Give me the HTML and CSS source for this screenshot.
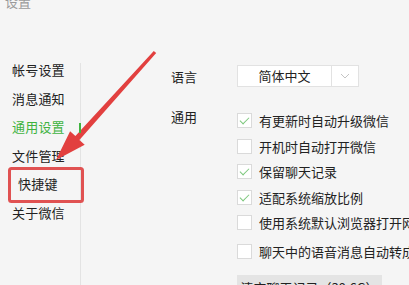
FILE: index.html
```html
<!DOCTYPE html>
<html lang="zh">
<head>
<meta charset="utf-8">
<link rel="stylesheet" href="styles.css">
</head>
<body>
<div class="window">
  <div class="title">设置</div>
  <div class="main">
    <nav class="sidebar">
      <div class="nav-item">帐号设置</div>
      <div class="nav-item">消息通知</div>
      <div class="nav-item active">通用设置</div>
      <div class="nav-item">文件管理</div>
      <div class="nav-item indent">快捷键</div>
      <div class="nav-item">关于微信</div>
    </nav>
    <section class="panel">
      <div class="row lang-row">
        <div class="label">语言</div>
        <div class="select">
          <div class="select-text">简体中文</div>
          <div class="select-arrow">
            <svg width="10" height="6" viewBox="0 0 10 6"><path d="M1 1 L5 5 L9 1" fill="none" stroke="#c4c4c4" stroke-width="1"/></svg>
          </div>
        </div>
      </div>
      <div class="row general-row">
        <div class="label general-label">通用</div>
        <div class="options">
          <div class="opt"><span class="box checked"></span>有更新时自动升级微信</div>
          <div class="opt"><span class="box"></span>开机时自动打开微信</div>
          <div class="opt"><span class="box checked"></span>保留聊天记录</div>
          <div class="opt"><span class="box checked"></span>适配系统缩放比例</div>
          <div class="opt"><span class="box"></span>使用系统默认浏览器打开网页</div>
          <div class="opt last"><span class="box"></span>聊天中的语音消息自动转成文字</div>
          <div class="btn">清空聊天记录（38.6G）</div>
        </div>
      </div>
    </section>
  </div>
  <svg class="annotation" width="409" height="285" viewBox="0 0 409 285">
    <rect x="9.5" y="168.5" width="73" height="33" rx="2" fill="none" stroke="#e05252" stroke-width="3"/>
    <polygon points="156.2,53.1 153.8,50.9 75.4,136.0 70.1,131.2 56,160 84.7,144.8 79.4,139.9" fill="#e2403f"/>
  </svg>
</div>
</body>
</html>
```
FILE: styles.css
```css
html, body {
  margin: 0;
  padding: 0;
  background: #f5f5f5;
}
.window {
  position: relative;
  width: 409px;
  height: 285px;
  overflow: hidden;
  background: #f5f5f5;
  font-family: "Noto Sans CJK SC", "Noto Sans", sans-serif;
  font-size: 13px;
  color: #222;
}
.title {
  margin-top: -5px;
  padding-left: 5px;
  height: 13px;
  line-height: 13px;
  color: #9a9a9a;
}
.main {
  display: flex;
  margin-top: 48px;
  height: 230px;
}
.sidebar {
  position: relative;
  width: 81px;
  flex: none;
}
.sidebar::after {
  content: "";
  position: absolute;
  top: 7px;
  bottom: -10px;
  right: 0;
  width: 1px;
  background: #e3e3e3;
}
.nav-item {
  position: relative;
  height: 28.6px;
  line-height: 28.6px;
  padding-left: 12px;
  letter-spacing: 0.2px;
}
.nav-item.indent {
  padding-left: 18px;
}
.nav-item.active {
  color: #3fb33f;
}
.nav-item.active::after {
  content: "";
  position: absolute;
  right: 0;
  top: 10px;
  width: 2px;
  height: 10px;
  background: #3fb33f;
  z-index: 1;
}
.panel {
  flex: 1;
  padding-left: 90px;
  padding-top: 9px;
}
.row {
  display: flex;
}
.label {
  width: 66px;
  flex: none;
}
.lang-row {
  align-items: center;
  height: 22px;
}
.select {
  display: flex;
  height: 22px;
  background: #fff;
  border: 1px solid #e2e2e2;
  box-sizing: border-box;
}
.select-text {
  width: 93px;
  text-align: center;
  line-height: 20px;
  border-right: 1px solid #e2e2e2;
}
.select-arrow {
  width: 26px;
  display: flex;
  align-items: center;
  justify-content: center;
}
.general-row {
  margin-top: 17px;
}
.general-label {
  line-height: 20px;
  padding-top: 3px;
}
.options {
  display: flex;
  flex-direction: column;
  padding-top: 4px;
}
.opt {
  display: flex;
  align-items: center;
  height: 25.5px;
  white-space: nowrap;
}
.opt.last {
  margin-top: 3px;
}
.box {
  position: relative;
  width: 15px;
  height: 15px;
  box-sizing: border-box;
  border: 1px solid #dadada;
  background: #fff;
  margin-right: 7px;
  flex: none;
}
.box.checked::after {
  content: "";
  position: absolute;
  left: 4px;
  top: 1px;
  width: 4px;
  height: 8px;
  border-right: 1px solid #7cc77c;
  border-bottom: 1px solid #7cc77c;
  transform: rotate(45deg);
}
.btn {
  margin-top: 11px;
  width: 145px;
  height: 30px;
  line-height: 13px;
  padding-top: 6px;
  box-sizing: border-box;
  background: #e4e4e4;
  text-align: center;
  white-space: nowrap;
}
.annotation {
  position: absolute;
  left: 0;
  top: 0;
  pointer-events: none;
}
```
